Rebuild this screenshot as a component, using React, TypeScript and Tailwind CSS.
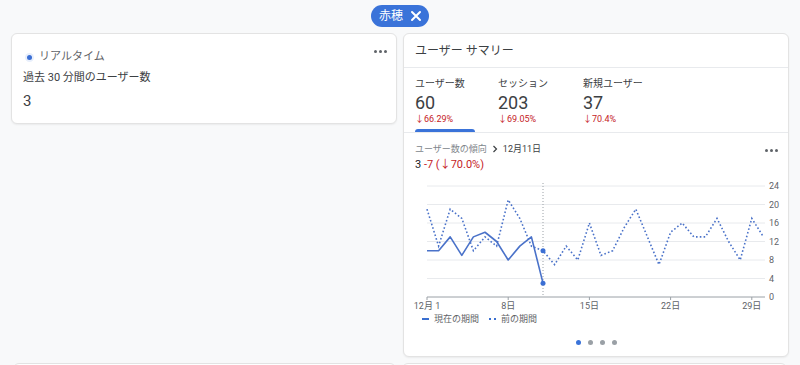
import React from "react";

const cur = [10, 10, 13, 9, 13, 14, 12, 8, 11, 13, 3];
const prev = [19, 11, 19, 17, 10, 13, 11, 21, 17, 11, 10, 7, 11, 8, 16, 9, 10, 15, 19, 13, 7, 14, 16, 13, 13, 17, 12, 8, 17, 13];

const px = (d: number) => 24 + (d - 1) * 11.6;
const py = (v: number) => 118 - v * 4.625;
const pts = (arr: number[]) => arr.map((v, i) => `${px(i + 1)},${py(v)}`).join(" ");

const Dots = () => (
  <div className="flex gap-[2px]">
    <span className="w-[3px] h-[3px] rounded-full bg-[#5f6368]" />
    <span className="w-[3px] h-[3px] rounded-full bg-[#5f6368]" />
    <span className="w-[3px] h-[3px] rounded-full bg-[#5f6368]" />
  </div>
);

const Chart = () => (
  <svg width="386" height="134" className="block">
    {[0, 4, 8, 12, 16, 20, 24].map((v) => (
      <g key={v}>
        {v > 0 && <line x1="24" x2="362" y1={py(v)} y2={py(v)} stroke="#e8eaed" strokeWidth="1" />}
        <text x="366" y={py(v) + 3} fontSize="9" fill="#5f6368">{v}</text>
      </g>
    ))}
    <line x1="24" x2="362" y1={py(0)} y2={py(0)} stroke="#9aa0a6" strokeWidth="1" />
    <line x1={px(11)} x2={px(11)} y1="4" y2={py(0)} stroke="#9aa0a6" strokeWidth="1" strokeDasharray="1 2" />
    {[1, 8, 15, 22, 29].map((d, i) => (
      <g key={d}>
        <line x1={px(d)} x2={px(d)} y1={py(0)} y2={py(0) + 3} stroke="#9aa0a6" />
        <text x={px(d)} y={py(0) + 12} fontSize="9" fill="#5f6368" textAnchor="middle">
          {i === 0 ? "12月 1" : `${d}日`}
        </text>
      </g>
    ))}
    <polyline points={pts(prev)} fill="none" stroke="#4a72c9" strokeWidth="1.6" strokeDasharray="1.6 2.2" />
    <polyline points={pts(cur)} fill="none" stroke="#4a72c9" strokeWidth="1.6" strokeLinejoin="round" />
    <circle cx={px(11)} cy={py(10)} r="2.5" fill="#3b6fd4" />
    <circle cx={px(11)} cy={py(3)} r="2.5" fill="#3b6fd4" />
  </svg>
);

const tabs = [
  { label: "ユーザー数", value: "60", change: "↓66.29%", w: "w-[83px]" },
  { label: "セッション", value: "203", change: "↓69.05%", w: "w-[85px]" },
  { label: "新規ユーザー", value: "37", change: "↓70.4%", w: "w-[85px]" },
];

export default function App() {
  return (
    <div className="w-[800px] h-[365px] overflow-hidden bg-[#f8f9fa] font-['Roboto','Noto_Sans_CJK_JP',sans-serif] text-[#202124]">
      <div className="flex justify-center pt-[5px]">
        <div className="flex items-center gap-[6px] h-[22px] pl-[8px] pr-[6px] rounded-full bg-[#3a73d9] text-white text-[12px]">
          <span>赤穂</span>
          <svg width="14" height="14" viewBox="0 0 14 14">
            <path d="M3 3 L11 11 M11 3 L3 11" stroke="white" strokeWidth="2" strokeLinecap="round" />
          </svg>
        </div>
      </div>

      <div className="flex gap-[6px] px-[11px] pt-[6px] items-start">
        <div className="w-[386px] h-[91px] bg-white border border-[#e3e3e3] rounded-[6px] shadow-[0_1px_2px_rgba(0,0,0,0.06)] px-[11px] pt-[12px] relative">
          <div className="absolute right-[9px] top-[16px]"><Dots /></div>
          <div className="flex items-center gap-[5px] h-[14px] mt-[4px]">
            <span className="w-[9px] h-[9px] rounded-full bg-[#e8effc] flex items-center justify-center ml-[2px]">
              <span className="w-[5px] h-[5px] rounded-full bg-[#3b6fd4]" />
            </span>
            <span className="text-[11px] text-[#5f6368]">リアルタイム</span>
          </div>
          <div className="text-[11px] mt-[7px] leading-[14px] text-[#3c4043]">過去 30 分間のユーザー数</div>
          <div className="text-[15px] mt-[7px] leading-[18px] text-[#3c4043]">3</div>
        </div>

        <div className="w-[386px] h-[324px] bg-white border border-[#e3e3e3] rounded-[6px] shadow-[0_1px_2px_rgba(0,0,0,0.06)] flex flex-col">
          <div className="h-[34px] border-b border-[#e8eaed] px-[11px] flex items-center text-[12px] text-[#3c4043]">
            ユーザー サマリー
          </div>
          <div className="h-[65px] border-b border-[#e8eaed] px-[11px] flex">
            {tabs.map((t, i) => (
              <div key={t.label} className={`${t.w} flex flex-col relative pt-[9px]`}>
                <span className="text-[10px] text-[#3c4043] leading-[14px]">{t.label}</span>
                <span className="text-[18px] leading-[20px] mt-[2px] text-[#3c4043]">{t.value}</span>
                <span className="text-[9px] text-[#c5221f] leading-[12px]">{t.change}</span>
                {i === 0 && <span className="absolute left-0 bottom-0 w-[60px] h-[3px] rounded-t-[3px] bg-[#3a73d9]" />}
              </div>
            ))}
          </div>
          <div className="px-[11px] pt-[10px] relative">
            <div className="absolute right-[10px] top-[16px]"><Dots /></div>
            <div className="flex items-center gap-[4px] text-[9px] leading-[12px]">
              <span className="text-[#80868b]">ユーザー数の傾向</span>
              <svg width="8" height="8" viewBox="0 0 8 8">
                <path d="M2.5 1 L5.5 4 L2.5 7" stroke="#3c4043" strokeWidth="1.2" fill="none" />
              </svg>
              <span className="text-[#3c4043]">12月11日</span>
            </div>
            <div className="text-[11px] leading-[14px] mt-[3px]">
              <span className="text-[#202124]">3</span>
              <span className="text-[#c5221f]"> -7 (↓70.0%)</span>
            </div>
          </div>
          <div className="mt-[7px] ml-[-1px]">
            <Chart />
          </div>
          <div className="flex items-center gap-[5px] px-[18px] text-[9px] text-[#5f6368] leading-[12px] mt-0">
            <span className="w-[7px] h-[2px] bg-[#3a6fd0]" />
            <span>現在の期間</span>
            <span className="ml-[5px] w-[7px] border-t-2 border-dotted border-[#3a6fd0]" />
            <span>前の期間</span>
          </div>
          <div className="flex justify-center gap-[7px] mt-[15px]">
            <span className="w-[5px] h-[5px] rounded-full bg-[#3a73d9]" />
            <span className="w-[5px] h-[5px] rounded-full bg-[#9aa0a6]" />
            <span className="w-[5px] h-[5px] rounded-full bg-[#9aa0a6]" />
            <span className="w-[5px] h-[5px] rounded-full bg-[#9aa0a6]" />
          </div>
        </div>
      </div>

      <div className="flex gap-[6px] px-[13px] mt-[6px]">
        <div className="w-[384px] h-[20px] bg-white border border-[#e3e3e3] rounded-t-[6px]" />
        <div className="w-[386px] h-[20px] bg-white border border-[#e3e3e3] rounded-t-[6px]" />
      </div>
    </div>
  );
}
